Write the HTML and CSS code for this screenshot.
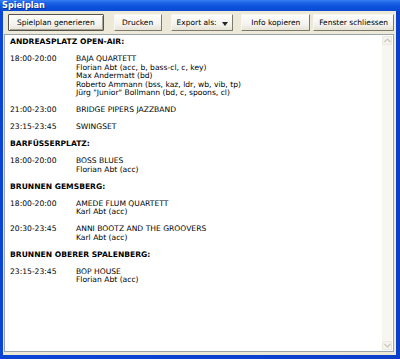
FILE: index.html
```html
<!DOCTYPE html>
<html>
<head>
<meta charset="utf-8">
<link rel="stylesheet" href="styles.css">
</head>
<body>
<div class="window">
  <div class="titlebar">Spielplan</div>
  <div class="client">
    <div class="toolbar">
      <button class="btn btn-gen default">Spielplan generieren</button>
      <button class="btn btn-print">Drucken</button>
      <button class="btn btn-export">Export als: <span class="caret"></span></button>
      <button class="btn btn-info">Info kopieren</button>
      <button class="btn btn-close">Fenster schliessen</button>
    </div>
    <div class="textarea">
      <div class="content">
        <div class="venue first">ANDREASPLATZ OPEN-AIR:</div>
        <div class="entry">
          <div class="time">18:00-20:00</div>
          <div class="acts">
            <div>BAJA QUARTETT</div>
            <div>Florian Abt (acc, b, bass-cl, c, key)</div>
            <div>Max Andermatt (bd)</div>
            <div>Roberto Ammann (bss, kaz, ldr, wb, vib, tp)</div>
            <div>Jürg "Junior" Bollmann (bd, c, spoons, cl)</div>
          </div>
        </div>
        <div class="entry">
          <div class="time">21:00-23:00</div>
          <div class="acts"><div>BRIDGE PIPERS JAZZBAND</div></div>
        </div>
        <div class="entry">
          <div class="time">23:15-23:45</div>
          <div class="acts"><div>SWINGSET</div></div>
        </div>
        <div class="venue">BARFÜSSERPLATZ:</div>
        <div class="entry">
          <div class="time">18:00-20:00</div>
          <div class="acts"><div>BOSS BLUES</div><div>Florian Abt (acc)</div></div>
        </div>
        <div class="venue">BRUNNEN GEMSBERG:</div>
        <div class="entry">
          <div class="time">18:00-20:00</div>
          <div class="acts"><div>AMEDE FLUM QUARTETT</div><div>Karl Abt (acc)</div></div>
        </div>
        <div class="entry">
          <div class="time">20:30-23:45</div>
          <div class="acts"><div>ANNI BOOTZ AND THE GROOVERS</div><div>Karl Abt (acc)</div></div>
        </div>
        <div class="venue">BRUNNEN OBERER SPALENBERG:</div>
        <div class="entry">
          <div class="time">23:15-23:45</div>
          <div class="acts"><div>BOP HOUSE</div><div>Florian Abt (acc)</div></div>
        </div>
      </div>
      <div class="scrollbar">
        <div class="sb-btn"><svg width="7" height="5" viewBox="0 0 7 5"><path d="M0.5 4 L3.5 1 L6.5 4" fill="none" stroke="#c9c7ba" stroke-width="1.2"/></svg></div>
        <div class="sb-track"></div>
        <div class="sb-btn"><svg width="7" height="5" viewBox="0 0 7 5"><path d="M0.5 1 L3.5 4 L6.5 1" fill="none" stroke="#c9c7ba" stroke-width="1.2"/></svg></div>
      </div>
    </div>
  </div>
</div>
</body>
</html>
```
FILE: styles.css
```css
html, body {
  margin: 0;
  padding: 0;
  width: 400px;
  height: 359px;
  overflow: hidden;
  background: #0a3fd0;
}
.window {
  width: 400px;
  height: 359px;
  box-sizing: border-box;
  display: flex;
  flex-direction: column;
  background: linear-gradient(to right, #0b45d6, #0a3fc9);
  padding: 0 4px 4px 3px;
  font-family: "DejaVu Sans", sans-serif;
  font-size: 7.6px;
  color: #000;
}
.titlebar {
  height: 11px;
  margin: 0 -4px 0 -3px;
  padding-left: 2px;
  background: linear-gradient(to bottom, #3a80f2 0%, #1d63e6 25%, #0c52dc 60%, #0a4ad2 100%);
  color: #fff;
  font-weight: bold;
  font-size: 8.2px;
  line-height: 11px;
  text-shadow: 1px 1px 0 #0a2f96;
}
.client {
  flex: 1;
  background: #ece9d8;
  display: flex;
  flex-direction: column;
  padding: 3px 2px 3px 1px;
  gap: 3px;
}
.toolbar {
  display: flex;
  height: 17px;
}
.btn {
  font-family: "DejaVu Sans", sans-serif;
  font-size: 7.5px;
  color: #000;
  height: 17px;
  padding: 0;
  margin: 0;
  box-sizing: border-box;
  background: linear-gradient(to bottom, #fdfdfb 0%, #f4f3ee 60%, #e6e3d6 100%);
  border: 1px solid;
  border-color: #f8f7f2 #7d7a6c #7d7a6c #f8f7f2;
  border-radius: 1px;
  display: flex;
  align-items: center;
  justify-content: center;
  white-space: nowrap;
}
.btn.default {
  border-color: #55534a;
  box-shadow: inset 1px 1px 0 #fff, inset -1px -1px 0 #a7a496;
}
.btn-gen { width: 96px; margin-left: 4px; }
.btn-print { width: 48px; margin-left: 10px; }
.btn-export { width: 63px; margin-left: 9px; justify-content: flex-start; padding-left: 5px; }
.btn-info { width: 69px; margin-left: 8px; }
.btn-close { width: 81px; margin-left: 3px; }
.caret {
  display: inline-block;
  width: 0;
  height: 0;
  margin-left: 5px;
  margin-top: 2px;
  border-left: 3.5px solid transparent;
  border-right: 3.5px solid transparent;
  border-top: 4px solid #222;
}
.textarea {
  flex: 1;
  background: #fff;
  border: 1px solid #9aa4ad;
  display: flex;
  min-height: 0;
}
.content {
  flex: 1;
  padding: 3px 0 0 5px;
  line-height: 8.5px;
  white-space: nowrap;
}
.venue {
  font-weight: bold;
  margin-top: 8.5px;
}
.venue.first { margin-top: 0; }
.entry {
  display: grid;
  grid-template-columns: 66px 1fr;
  margin-top: 8.5px;
}
.scrollbar {
  width: 10px;
  margin: 1px 1px 1px 0;
  display: flex;
  flex-direction: column;
  background: #f7f6f1;
}
.sb-btn {
  height: 9px;
  box-sizing: border-box;
  border: 1px solid #ebe9df;
  background: #f4f3ec;
  border-radius: 1px;
  display: flex;
  align-items: center;
  justify-content: center;
}
.sb-track { flex: 1; }
```
